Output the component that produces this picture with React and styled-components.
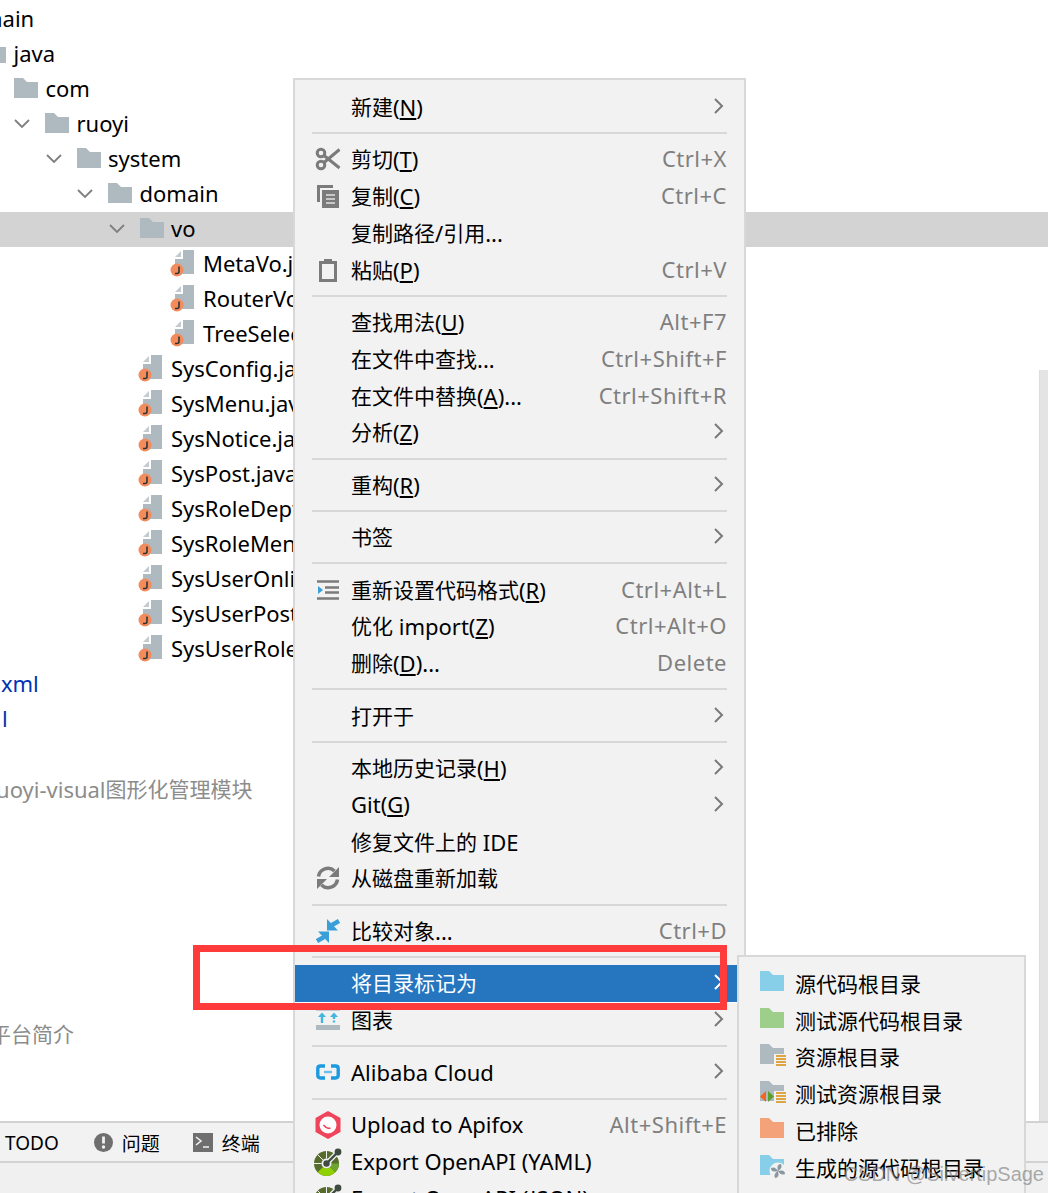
import React from 'react'
import styled, { createGlobalStyle } from 'styled-components'

const GlobalStyle = createGlobalStyle`
  html, body { margin: 0; padding: 0; background: #fff; }
  body { font-family: "Noto Sans", "Noto Sans CJK SC", sans-serif; }
`

const Folder = ({ color = '#afb9c0', children }) => (
  <FolderSvg width="24" height="22" viewBox="0 0 24 22">
    <path d="M0 0h9l4 4h11v16H0z" fill={color} />
    {children}
  </FolderSvg>
)

const ResourceMark = () => (
  <>
    <rect x="14" y="10" width="13" height="13" fill="#f2f2f2" />
    <path d="M16 12h10M16 15h10M16 18h10M16 21h10" stroke="#dea545" strokeWidth="2" />
  </>
)

const FileIcon = () => (
  <svg width="24" height="28" viewBox="0 0 24 28">
    <path d="M5 7l6-6v6z" fill="#c3cbd1" />
    <path d="M13 0h11v24H13zM5 9h8v15H5z" fill="#afb9c0" />
    <circle cx="7" cy="20" r="6.5" fill="#f28c5d" />
    <path d="M9 16.5v5q0 2-2 2h-2" fill="none" stroke="#333" strokeWidth="1.6" />
  </svg>
)

const Scissors = () => (
  <svg width="26" height="24" viewBox="0 0 26 24" fill="none" stroke="#7b7b7b" strokeWidth="3">
    <circle cx="6" cy="6" r="3.8" />
    <circle cx="6" cy="18" r="3.8" />
    <path d="M9 8.5L24.5 21M9 15.5L24.5 2.5" />
  </svg>
)

const Copy = () => (
  <svg width="22" height="23" viewBox="0 0 22 23">
    <path d="M0 0h16v3H3v14H0z" fill="#7b7b7b" />
    <rect x="5" y="5" width="17" height="18" fill="#7b7b7b" />
    <path d="M9 10h9M9 14h9M9 18h9" stroke="#e2e2e2" strokeWidth="1.6" />
  </svg>
)

const Paste = () => (
  <svg width="18" height="24" viewBox="0 0 18 24" fill="none">
    <rect x="1.5" y="4.5" width="15" height="18" stroke="#7b7b7b" strokeWidth="3" />
    <rect x="5" y="1" width="8" height="5" fill="#7b7b7b" />
  </svg>
)

const Reformat = () => (
  <svg width="22" height="20" viewBox="0 0 22 20">
    <path d="M0 1.5h22M8 7.5h14M8 12.5h14M0 18.5h22" stroke="#7b7b7b" strokeWidth="2.6" />
    <path d="M1 6l5 4-5 4z" fill="#3a9fd8" />
  </svg>
)

const Reload = () => (
  <svg width="24" height="24" viewBox="0 0 24 24" fill="none">
    <path d="M2.500 10.500A9.500 9.500 0 0 1 18.500 5" stroke="#7b7b7b" strokeWidth="3.600" />
    <path d="M21.500 13.500A9.500 9.500 0 0 1 5.500 19" stroke="#7b7b7b" strokeWidth="3.600" />
    <path d="M23 1v10H13zM1 23V13h10z" fill="#7b7b7b" />
  </svg>
)

const Compare = () => (
  <svg width="24" height="24" viewBox="0 0 24 24">
    <path d="M11 11.500V0l11 11.500z" fill="#3a9fd8" />
    <path d="M16 6l7-4" stroke="#3a9fd8" strokeWidth="4.500" />
    <path d="M13 12.500V24L2 12.500z" fill="#3a9fd8" />
    <path d="M8 18l-7 4" stroke="#3a9fd8" strokeWidth="4.500" />
  </svg>
)

const Diagram = () => (
  <svg width="24" height="22" viewBox="0 0 24 22">
    <path d="M0 1h24" stroke="#c3cbd1" strokeWidth="2" />
    <path d="M0 18.500h24" stroke="#afb9c0" strokeWidth="5" />
    <path d="M6 3.500l4 4.500H2zM18 3.500l4 4.500h-8z" fill="#40b6e0" />
    <path d="M6 8v6" stroke="#40b6e0" strokeWidth="2.400" />
    <path d="M18 8v6" stroke="#40b6e0" strokeWidth="2.400" strokeDasharray="2 1.500" />
  </svg>
)

const AlibabaCloud = () => (
  <svg width="24" height="16" viewBox="0 0 24 16" fill="none">
    <path d="M9 2H4.500Q1.800 2 1.800 4.500v7Q1.800 14 4.500 14H9M15 2h4.500q2.700 0 2.700 2.500v7q0 2.500-2.700 2.500H15" stroke="#1b9ae0" strokeWidth="3.400" />
    <path d="M8 8h8" stroke="#6fbde8" strokeWidth="2.400" />
  </svg>
)

const Apifox = () => (
  <svg width="26" height="28" viewBox="0 0 26 28">
    <path d="M13 0l12.500 7v14L13 28 .5 21V7z" fill="#f0445c" />
    <circle cx="13" cy="14" r="8.500" fill="#fff" />
    <path d="M13 5.500a6 6 0 0 0 8.500 8.500 4 4 0 0 1-8.500-8.500z" fill="#f0445c" />
    <path d="M8.500 14q3.500 4.500 7 3" stroke="#f0445c" strokeWidth="1.600" fill="none" />
  </svg>
)

const OpenApi = () => (
  <svg width="28" height="28" viewBox="0 0 28 28">
    <circle cx="12.500" cy="15.500" r="12.500" fill="#566b2c" />
    <path d="M3.700 24.300a12.500 12.500 0 0 0 17.600 0L16 19a5 5 0 0 1-7 0z" fill="#8fd000" />
    <path d="M21.300 24.300A12.500 12.500 0 0 0 25 15.500h-7.500a5 5 0 0 1-1.500 3.500z" fill="#6ea52e" />
    <path d="M12.500 3v7.500M3.700 6.700L9 12M0 15.500h7.500" stroke="#f2f2f2" strokeWidth="1" />
    <circle cx="12.500" cy="15.500" r="5" fill="#f2f2f2" />
    <path d="M12.500 15.500L24 4" stroke="#f2f2f2" strokeWidth="5" />
    <path d="M12.500 15.500L24 4" stroke="#3f4a40" strokeWidth="2.400" />
    <circle cx="12.500" cy="15.500" r="3.200" fill="#3f4a40" />
    <circle cx="24" cy="4" r="3.400" fill="#3f4a40" />
  </svg>
)

const Fan = () => (
  <g fill="#8a97a1">
    <circle cx="18" cy="16" r="8.500" fill="#f2f2f2" />
    <path d="M18 16q-2-7 3-7 2 4-3 7zM18 16q7-2 7 3-4 2-7-3zM18 16q2 7-3 7-2-4 3-7zM18 16q-7 2-7-3 4-2 7 3z" />
  </g>
)

const WarnIcon = () => (
  <svg width="19" height="19" viewBox="0 0 19 19">
    <circle cx="9.500" cy="9.500" r="9.500" fill="#6f6f6f" />
    <path d="M9.500 3.500v7" stroke="#f2f2f2" strokeWidth="2.800" />
    <circle cx="9.500" cy="14" r="1.700" fill="#f2f2f2" />
  </svg>
)

const TerminalIcon = () => (
  <svg width="20" height="19" viewBox="0 0 20 19">
    <rect width="20" height="19" fill="#6f6f6f" />
    <path d="M3 4l5 4-5 4M10 14h6" fill="none" stroke="#f2f2f2" strokeWidth="1.600" />
  </svg>
)

// latin runs sit a touch larger than the cjk ones, like the original font
const Mixed = ({ text }) =>
  text.split(/([\x00-\x7f]+)/).filter(Boolean).map((part, i) =>
    /^[\x00-\x7f]/.test(part) ? <Latin key={i}>{part}</Latin> : <Cjk key={i}>{part}</Cjk>
  )

const treeRows = [
  { x: -18, label: 'main', plain: true },
  { x: -49, label: 'java', icon: 'folder' },
  { x: -17, label: 'com', icon: 'folder' },
  { x: 14, label: 'ruoyi', icon: 'folder', open: true },
  { x: 45.5, label: 'system', icon: 'folder', open: true },
  { x: 77, label: 'domain', icon: 'folder', open: true },
  { x: 108.5, label: 'vo', icon: 'folder', open: true, selected: true },
  { x: 139, label: 'MetaVo.java', icon: 'file' },
  { x: 139, label: 'RouterVo.java', icon: 'file' },
  { x: 139, label: 'TreeSelect.java', icon: 'file' },
  { x: 107, label: 'SysConfig.java', icon: 'file' },
  { x: 107, label: 'SysMenu.java', icon: 'file' },
  { x: 107, label: 'SysNotice.java', icon: 'file' },
  { x: 107, label: 'SysPost.java', icon: 'file' },
  { x: 107, label: 'SysRoleDept.java', icon: 'file' },
  { x: 107, label: 'SysRoleMenu.java', icon: 'file' },
  { x: 107, label: 'SysUserOnline.java', icon: 'file' },
  { x: 107, label: 'SysUserPost.java', icon: 'file' },
  { x: 107, label: 'SysUserRole.java', icon: 'file' },
  { x: -5, label: '.xml', plain: true, tone: 'link' },
  { x: 2, label: 'l', plain: true, tone: 'link' },
  { plain: true },
  { x: -13, label: 'ruoyi-visual图形化管理模块', plain: true, tone: 'muted' },
  { plain: true },
  { plain: true },
  { plain: true },
  { plain: true },
  { plain: true },
  { plain: true },
  { x: -10, label: '平台简介', plain: true, tone: 'muted' },
]

const menuItems = [
  { label: '新建', mnemonic: 'N', sub: true },
  { sep: true },
  { label: '剪切', mnemonic: 'T', hint: 'Ctrl+X', icon: <Scissors /> },
  { label: '复制', mnemonic: 'C', hint: 'Ctrl+C', icon: <Copy /> },
  { label: '复制路径/引用...' },
  { label: '粘贴', mnemonic: 'P', hint: 'Ctrl+V', icon: <Paste /> },
  { sep: true },
  { label: '查找用法', mnemonic: 'U', hint: 'Alt+F7' },
  { label: '在文件中查找...', hint: 'Ctrl+Shift+F' },
  { label: '在文件中替换', mnemonic: 'A', after: '...', hint: 'Ctrl+Shift+R' },
  { label: '分析', mnemonic: 'Z', sub: true },
  { sep: true },
  { label: '重构', mnemonic: 'R', sub: true },
  { sep: true },
  { label: '书签', sub: true },
  { sep: true },
  { label: '重新设置代码格式', mnemonic: 'R', hint: 'Ctrl+Alt+L', icon: <Reformat /> },
  { label: '优化 import', mnemonic: 'Z', hint: 'Ctrl+Alt+O' },
  { label: '删除', mnemonic: 'D', after: '...', hint: 'Delete' },
  { sep: true },
  { label: '打开于', sub: true },
  { sep: true },
  { label: '本地历史记录', mnemonic: 'H', sub: true },
  { label: 'Git', mnemonic: 'G', sub: true },
  { label: '修复文件上的 IDE' },
  { label: '从磁盘重新加载', icon: <Reload /> },
  { sep: true },
  { label: '比较对象...', hint: 'Ctrl+D', icon: <Compare /> },
  { sep: true },
  { label: '将目录标记为', sub: true, active: true },
  { label: '图表', sub: true, icon: <Diagram /> },
  { sep: true },
  { label: 'Alibaba Cloud', sub: true, icon: <AlibabaCloud /> },
  { sep: true },
  { label: 'Upload to Apifox', hint: 'Alt+Shift+E', icon: <Apifox /> },
  { label: 'Export OpenAPI (YAML)', icon: <OpenApi /> },
  { label: 'Export OpenAPI (JSON)', icon: <OpenApi /> },
]

const subItems = [
  { label: '源代码根目录', icon: <Folder color="#87cfe9" /> },
  { label: '测试源代码根目录', icon: <Folder color="#9ecf8a" /> },
  { label: '资源根目录', icon: <Folder><ResourceMark /></Folder> },
  {
    label: '测试资源根目录',
    icon: (
      <Folder>
        <ResourceMark />
        <path d="M6 10v11l-6-5.500z" fill="#f26522" />
        <path d="M8 10v11l6-5.500z" fill="#5aa02c" />
      </Folder>
    ),
  },
  { label: '已排除', icon: <Folder color="#f4a27a" /> },
  { label: '生成的源代码根目录', icon: <Folder color="#87cfe9"><Fan /></Folder> },
]

const App = () => {
  return (
    <Page>
      <GlobalStyle />

      <Tree>
        {treeRows.map((row, i) => (
          <TreeRow key={i} $selected={row.selected}>
            {row.label && (
              <TreeInner style={{ marginLeft: row.x }}>
                {!row.plain && (
                  <ChevronSlot>
                    {row.open && (
                      <svg width="16" height="10" viewBox="0 0 16 10" fill="none">
                        <path d="M1 1l7 7 7-7" stroke="#7f7f7f" strokeWidth="1.800" />
                      </svg>
                    )}
                  </ChevronSlot>
                )}
                {row.icon === 'folder' && <TreeIcon $width={31.5}><Folder /></TreeIcon>}
                {row.icon === 'file' && <TreeIcon $width={33}><FileIcon /></TreeIcon>}
                <TreeLabel $tone={row.tone}><Mixed text={row.label} /></TreeLabel>
              </TreeInner>
            )}
          </TreeRow>
        ))}
      </Tree>

      <StatusBar>
        <TodoItem><StatusText>TODO</StatusText></TodoItem>
        <StatusItem><WarnIcon /><StatusText>问题</StatusText></StatusItem>
        <StatusItem><TerminalIcon /><StatusText>终端</StatusText></StatusItem>
        <StatusItem><WarnIcon /></StatusItem>
      </StatusBar>
      <Footer />

      <Scrollbar />

      <Menu>
        {menuItems.map((item, i) =>
          item.sep ? (
            <Separator key={i} />
          ) : (
            <MenuRow key={i} $active={item.active}>
              <IconSlot>{item.icon}</IconSlot>
              <MenuLabel>
                <Mixed text={item.label} />
                {item.mnemonic && <Latin>(<u>{item.mnemonic}</u>)</Latin>}
                {item.after && <Latin>{item.after}</Latin>}
              </MenuLabel>
              {item.hint && <Hint>{item.hint}</Hint>}
              {item.sub && (
                <Arrow viewBox="0 0 10 16" fill="none">
                  <path d="M1 1l7 7-7 7" stroke={item.active ? '#fff' : '#7a7a7a'} strokeWidth="2" />
                </Arrow>
              )}
            </MenuRow>
          )
        )}
      </Menu>

      <Highlight />

      <SubMenu>
        {subItems.map((item) => (
          <SubRow key={item.label}>
            <SubIcon>{item.icon}</SubIcon>
            <Cjk>{item.label}</Cjk>
          </SubRow>
        ))}
      </SubMenu>

      <Watermark>CSDN @SilvertipSage</Watermark>
    </Page>
  )
}

const Page = styled.div`
  position: relative;
  width: 1048px;
  height: 1193px;
  overflow: hidden;
  background: #fff;
  display: flex;
  flex-direction: column;
  color: #000;
`

const FolderSvg = styled.svg`
  display: block;
  overflow: visible;
`

const Latin = styled.span`
  font-size: 22px;
`

const Cjk = styled.span`
  vertical-align: 1px;
`

const Tree = styled.div`
  height: 1121px;
  flex: none;
  padding-top: 1.5px;
  box-sizing: border-box;
  font-size: 21px;
  overflow: hidden;
`

const TreeRow = styled.div`
  height: 35px;
  background: ${(p) => (p.$selected ? '#d3d3d3' : 'transparent')};
`

const TreeInner = styled.div`
  display: flex;
  align-items: center;
  height: 100%;
  white-space: nowrap;
`

const ChevronSlot = styled.div`
  flex: none;
  width: 31px;
  display: flex;
  align-items: center;
`

const TreeIcon = styled.div`
  flex: none;
  width: ${(p) => p.$width}px;
  height: 28px;
  display: flex;
  align-items: center;
`

const TreeLabel = styled.span`
  padding-bottom: 2px;
  color: ${(p) => (p.$tone === 'link' ? '#0033b3' : p.$tone === 'muted' ? '#8c8c8c' : '#000')};
`

const StatusBar = styled.div`
  flex: none;
  height: 38px;
  box-sizing: content-box;
  border-top: 2px solid #d2d2d2;
  border-bottom: 2px solid #d2d2d2;
  background: #f2f2f2;
  display: flex;
  align-items: center;
  gap: 33px;
  padding-left: 5px;
  font-size: 19px;
`

const StatusItem = styled.div`
  display: flex;
  align-items: center;
  gap: 9px;
  white-space: nowrap;
`

const StatusText = styled.span`
  padding-top: 1px;
`

const TodoItem = styled(StatusItem)`
  margin-right: 2px;
`

const Footer = styled.div`
  flex: 1;
  background: #f0f0f0;
`

const Scrollbar = styled.div`
  position: absolute;
  left: 1039px;
  top: 370px;
  width: 9px;
  height: 751px;
  background: #e4e4e4;
  border-left: 1px solid #dcdcdc;
  box-sizing: border-box;
`

const Menu = styled.div`
  position: absolute;
  left: 293px;
  top: 78px;
  width: 453px;
  box-sizing: border-box;
  border: 2px solid #d8d8d8;
  background: #f2f2f2;
  padding-top: 8.6px;
  font-size: 21px;
`

const MenuRow = styled.div`
  display: flex;
  align-items: center;
  height: 36.75px;
  padding: 0 17px 0 10px;
  white-space: nowrap;
  background: ${(p) => (p.$active ? '#2675bf' : 'transparent')};
  color: ${(p) => (p.$active ? '#fff' : '#000')};
  box-shadow: ${(p) => (p.$active ? '0 1px 0 #fff' : 'none')};
`

const IconSlot = styled.div`
  flex: none;
  width: 46px;
  display: flex;
  justify-content: center;
  align-items: center;
  height: 100%;
`

const MenuLabel = styled.span`
  padding-bottom: 1px;
`

const Hint = styled.span`
  margin-left: auto;
  margin-bottom: 2px;
  color: #7f7f7f;
  font-size: 22px;
  letter-spacing: 0.5px;
`

const Arrow = styled.svg`
  flex: none;
  width: 10px;
  height: 16px;
  margin-left: auto;
  margin-right: 3px;
  margin-bottom: 2px;
`

const Separator = styled.div`
  height: 15.7px;
  display: flex;
  align-items: center;
  margin: 0 17px;

  &::before {
    content: '';
    flex: 1;
    height: 2px;
    background: #d8d8d8;
  }
`

const Highlight = styled.div`
  position: absolute;
  left: 193px;
  top: 945px;
  width: 534px;
  height: 65px;
  box-sizing: border-box;
  border: 7px solid #ff3b3b;
`

const SubMenu = styled.div`
  position: absolute;
  left: 737px;
  top: 955px;
  width: 289px;
  height: 300px;
  box-sizing: border-box;
  border: 2px solid #d8d8d8;
  background: #f2f2f2;
  padding-top: 7.6px;
  font-size: 21px;
`

const SubRow = styled.div`
  display: flex;
  align-items: center;
  height: 36.75px;
  padding-left: 21px;
  white-space: nowrap;
`

const SubIcon = styled.div`
  flex: none;
  width: 35px;
  height: 24px;
`

const Watermark = styled.div`
  position: absolute;
  right: 4px;
  top: 1163px;
  font-family: "Liberation Sans", sans-serif;
  font-size: 20px;
  color: rgba(125, 125, 125, 0.65);
  white-space: nowrap;
`

export default App
